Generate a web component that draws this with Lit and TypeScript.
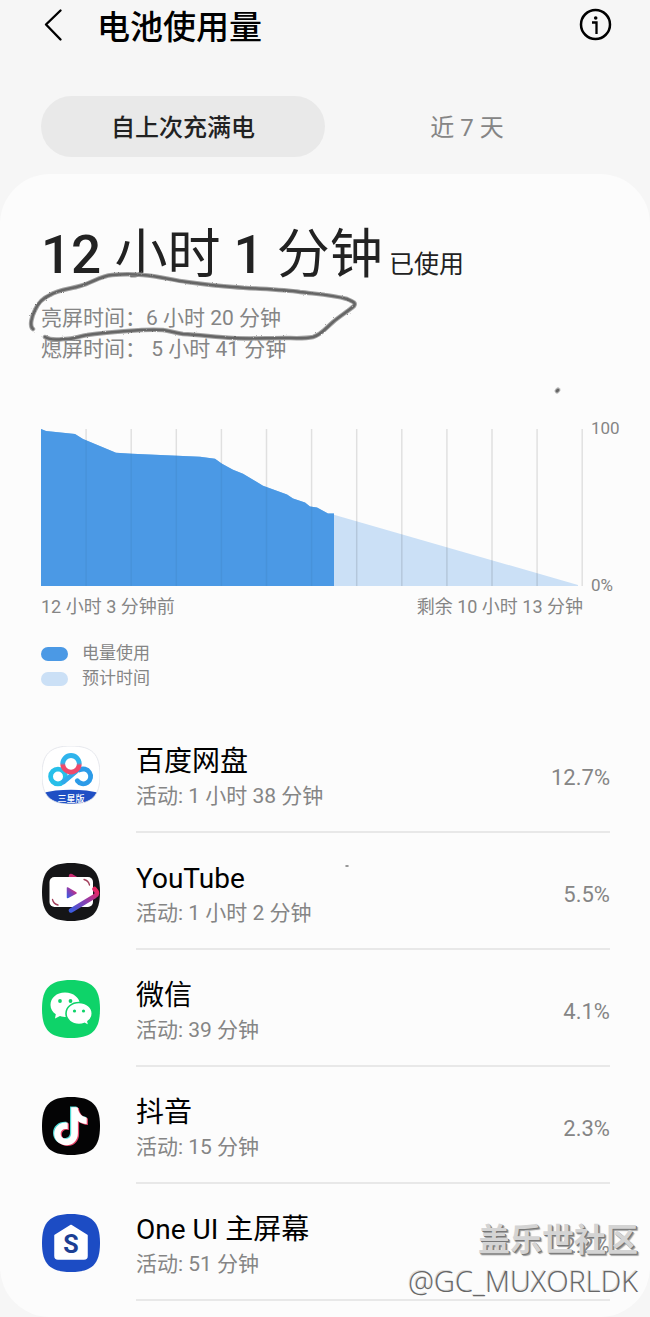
import { LitElement, html, svg, css } from "lit";
import { customElement, state } from "lit/decorators.js";

interface AppUsage {
  name: string;
  active: string;
  percent: string;
  icon: unknown;
}

const SQUIRCLE = "M29 0C50 0 58 8 58 29S50 58 29 58 0 50 0 29 8 0 29 0Z";

const panIcon = svg`
  <defs>
    <clipPath id="pan-clip"><path d=${SQUIRCLE} /></clipPath>
    <linearGradient id="pan-ring" x1="0" y1="0" x2="0" y2="1">
      <stop offset="0.45" stop-color="#2fb4ec" /><stop offset="0.6" stop-color="#ef4a6b" />
    </linearGradient>
  </defs>
  <path d=${SQUIRCLE} fill="#fff" />
  <path d="M0 47C16 42.500 42 42.500 58 47V58H0Z" fill="#1f4fc4" clip-path="url(#pan-clip)" />
  <path d=${SQUIRCLE} fill="none" stroke="#e0e2e8" stroke-width="0.800" />
  <g fill="none" stroke-width="4.800" stroke-linecap="round">
    <circle cx="16" cy="30.500" r="7.400" stroke="#27bfe9" />
    <path d="M35.300 34.800A7.400 7.400 0 1 0 37.500 24" stroke="#2c9be8" />
    <path d="M21.500 35.800L34 25.500" stroke="#31a9ea" />
    <circle cx="29" cy="17.800" r="8.300" stroke="url(#pan-ring)" />
  </g>
  <text class="badge" x="29" y="55.500" text-anchor="middle">三星版</text>`;

const videoIcon = svg`
  <defs>
    <linearGradient id="vid-stroke" x1="0" y1="1" x2="1" y2="0">
      <stop offset="0" stop-color="#3c5be0" /><stop offset="0.5" stop-color="#8a3fb0" /><stop offset="1" stop-color="#f0245c" />
    </linearGradient>
  </defs>
  <path d=${SQUIRCLE} fill="#151517" />
  <path d="M29 13L34 16" stroke="#c92a70" stroke-width="4.500" stroke-linecap="round" />
  <rect x="7.500" y="14" width="43.500" height="30" rx="5" fill="#fff" />
  <path d="M29 47.500L53 33Q56 31 54.500 28.500L52.500 26" fill="none" stroke="url(#vid-stroke)" stroke-width="4.500" stroke-linecap="round" stroke-linejoin="round" />
  <path d="M25.500 25V34.500L34 30Z" fill="url(#vid-stroke)" stroke="url(#vid-stroke)" stroke-width="1.500" stroke-linejoin="round" />
  <path d="M42 16.500Q46.500 17.500 47.500 22M10.500 36.500Q11.500 41 16 42" fill="none" stroke="#a3405c" stroke-width="1.300" stroke-linecap="round" />`;

const chatIcon = svg`
  <path d=${SQUIRCLE} fill="#0ed369" />
  <path d="M23 12.500C14.500 12.500 8.500 18 8.500 25C8.500 29 10.500 32 13.800 34.300L13 38.500L18 36C20 36.800 22 37 25 37C34 36 38 31 38 25C38 18 31.500 12.500 23 12.500Z" fill="#fff" />
  <path d="M37 22.500C29.500 22.500 24 27.500 24 33.500S29.500 44.500 37 44.500C39 44.500 40.800 44.200 42.500 43.500L47 46L46 41.500C48.800 39.500 50.300 36.800 50.300 33.500C50.300 27.500 44.500 22.500 37 22.500Z" fill="#fff" stroke="#0ed369" stroke-width="1.600" />
  <g fill="#0ed369">
    <circle cx="18" cy="21" r="1.900" /><circle cx="28.500" cy="21" r="1.900" />
    <circle cx="32.500" cy="31" r="1.600" /><circle cx="41.500" cy="31" r="1.600" />
  </g>`;

const NOTE = "M28 9.500H34.500C35 15 38.500 19 43.500 19.800V26.300C40 26.200 37 25 34.700 23.300V35.500C34.700 43 29.500 47.500 23 47.500S11 42.500 11 36C11 29 17 24 24.500 24.800V31.500C20.500 30.500 17.500 32.700 17.500 36S20 41 22.800 41C26 41 28 38.800 28 35.500Z";
const noteIcon = svg`
  <path d=${SQUIRCLE} fill="#040405" />
  <path d=${NOTE} fill="#4fd9d6" />
  <path d=${NOTE} fill="#e8476b" transform="translate(2.400 1.600)" />
  <path d=${NOTE} fill="#fff" transform="translate(1.200 0.800)" />`;

const homeIcon = svg`
  <path d=${SQUIRCLE} fill="#1c4cc4" />
  <path d="M29 11.500L45 21.500V42Q45 45 42 45H16Q13 45 13 42V21.500Z" fill="#fff" stroke="#fff" stroke-width="1.500" stroke-linejoin="round" />
  <text class="letter" x="29" y="39" text-anchor="middle">S</text>`;

const APPS: AppUsage[] = [
  { name: "百度网盘", active: "活动: 1 小时 38 分钟", percent: "12.7%", icon: panIcon },
  { name: "YouTube", active: "活动: 1 小时 2 分钟", percent: "5.5%", icon: videoIcon },
  { name: "微信", active: "活动: 39 分钟", percent: "4.1%", icon: chatIcon },
  { name: "抖音", active: "活动: 15 分钟", percent: "2.3%", icon: noteIcon },
  { name: "One UI 主屏幕", active: "活动: 51 分钟", percent: "2.2%", icon: homeIcon },
];

const USED_AREA = "M0 0L5 2L34 5L42 10L75 24L91 25L159 28L174 30L181 35L192 41L202 45L222 57L246 66L252 70L264 74L269 78L276 79L287 85H293V158H0Z";
const PENCIL_LOOP = "M33 329C29 326 32 316 35 310C38 303 43 298 50 295C58 290 70 289 80 286C92 283 100 276 112 275C122 274 133 274 143 275C158 276 172 280 187 282C202 284 218 286 233 287C255 289 280 289 300 292C316 294 333 295 347 299C354 302 356 303 354 306C347 312 340 316 333 322C326 328 321 335 313 337C304 339 293 338 283 338C266 338 250 339 233 338C216 337 200 335 183 334C176 333 170 331 163 330C151 329 139 330 127 331C113 332 100 333 87 335C79 336 72 340 63 339C56 340 50 340 45 337";

@customElement("battery-chart")
export class BatteryChart extends LitElement {
  static styles = css`
    :host { display: block; }
    .plot { display: grid; grid-template-columns: 1fr 30px; column-gap: 8px; }
    .graph { display: block; width: 100%; height: 157px; }
    .scale { display: flex; flex-direction: column; justify-content: space-between; margin: -13px 0 -11px; }
    .scale, .legend { font-size: 17px; line-height: 24px; color: #858585; }
    .range { display: flex; justify-content: space-between; margin: 9px 38px 0 0; font-size: 18px; line-height: 24px; color: #858585; }
    .legend { list-style: none; margin: 22px 0 0; padding: 0; line-height: 25px; }
    .key { display: flex; align-items: center; gap: 14px; }
    .swatch { width: 27px; height: 14px; border-radius: 7px; background: #4b99e5; }
    .swatch.forecast { background: #cbe0f6; }
  `;

  render() {
    const lines = Array.from({ length: 12 }, (_, i) => (i + 1) * 45.1);
    return html`
      <div class="plot">
        <svg class="graph" viewBox="0 0 542 158" preserveAspectRatio="none" role="img" aria-label="电量使用">
          <path fill="#cbe0f6" d="M292 86L537 157V158H292Z" />
          <path fill="#4b99e5" d=${USED_AREA} />
          ${lines.map((x) => svg`<path d="M${x} 0V158" stroke="#000" stroke-opacity="0.110" stroke-width="1.500" />`)}
          <path fill="#4b99e5" fill-opacity="0.600" d=${USED_AREA} />
        </svg>
        <div class="scale"><span>100</span><span>0%</span></div>
      </div>
      <div class="range"><span>12 小时 3 分钟前</span><span>剩余 10 小时 13 分钟</span></div>
      <ul class="legend">
        <li class="key"><span class="swatch"></span>电量使用</li>
        <li class="key"><span class="swatch forecast"></span>预计时间</li>
      </ul>
    `;
  }
}

@customElement("app-root")
export class AppRoot extends LitElement {
  @state() private tab = 0;

  static styles = css`
    :host {
      display: block;
      background: #f6f6f6;
      color: #000;
      font-family: Roboto, "Noto Sans CJK SC", sans-serif;
    }
    button { border: 0; padding: 0; background: none; font: inherit; color: inherit; cursor: pointer; }
    .header { display: flex; align-items: center; height: 50px; padding: 0 37px; }
    .icon-button { display: flex; width: 34px; height: 34px; }
    .title { flex: 1; margin: 0 0 0 26px; padding-top: 5px; font-size: 33px; line-height: 45px; font-weight: 500; }
    .tabs { display: grid; grid-template-columns: 1fr 1fr; margin: 46px 41px 17px; }
    .tab { height: 61px; padding-bottom: 2px; border-radius: 31px; font-size: 24px; color: #858585; }
    .tab[aria-selected="true"] { background: #e9e9e9; color: #222; font-weight: 500; }
    .card { position: relative; padding: 51px 0 16px; border-radius: 50px; background: #fcfcfc; }
    .summary { padding: 0 41px; }
    .total { margin: 0; font-size: 53px; line-height: 60px; color: #222; }
    .number { font-weight: 500; }
    .suffix { font-size: 25px; }
    .times { margin: 8px 0 64px; font-size: 21px; line-height: 31px; color: #858585; }
    .times p { margin: 0; white-space: pre; }
    .chart { margin: 0 29px 0 41px; }
    .apps { list-style: none; margin: 25px 40px 0 42px; padding: 0; }
    .app { display: grid; grid-template-columns: 58px 1fr; column-gap: 36px; align-items: center; }
    .app-icon { display: block; width: 58px; height: 58px; }
    .badge { font-size: 9px; font-weight: 500; fill: #fff; }
    .letter { font-size: 25px; font-weight: 700; fill: #1c3f94; }
    .row { display: flex; align-items: center; justify-content: space-between; box-sizing: border-box; height: 117px; padding-top: 8px; border-bottom: 2px solid #e8e8e8; }
    .name { margin: 0; font-size: 28px; line-height: 36px; font-weight: 400; }
    .active { margin: 0; font-size: 21px; line-height: 32px; color: #858585; }
    .percent { font-size: 22px; color: #858585; }
    .scribble { position: absolute; left: 0; top: 0; width: 600px; height: 720px; pointer-events: none; }
    .watermark { position: absolute; right: 12px; bottom: 17px; text-align: right; pointer-events: none; }
    .community { font-size: 32px; line-height: 44px; font-weight: 700; color: #d4d4d4; text-shadow: 1px 1px 0 #777, 2px 2px 1px #999; }
    .author { font-family: "Open Sans", "Noto Sans", sans-serif; font-size: 29px; line-height: 38px; font-weight: 300; color: #666; text-shadow: -1px -1px 0 #ddd; }
  `;

  private renderApp(app: AppUsage) {
    return html`
      <li class="app">
        <svg class="app-icon" viewBox="0 0 58 58" aria-hidden="true">${app.icon}</svg>
        <div class="row">
          <div>
            <h2 class="name">${app.name}</h2>
            <p class="active">${app.active}</p>
          </div>
          <span class="percent">${app.percent}</span>
        </div>
      </li>
    `;
  }

  render() {
    return html`
      <header class="header">
        <button class="icon-button" aria-label="返回">
          <svg width="34" height="34" viewBox="0 0 34 34" fill="none" stroke="#000" stroke-width="2.400" stroke-linecap="round" stroke-linejoin="round"><path d="M23.500 2.500L9 16.500L23.500 31.500" /></svg>
        </button>
        <h1 class="title">电池使用量</h1>
        <button class="icon-button" aria-label="信息">
          <svg width="34" height="34" viewBox="0 0 34 34" fill="none" stroke="#000" stroke-width="2.500">
            <circle cx="16.500" cy="16.500" r="14.500" /><path d="M13 14.500H17.500V26" stroke-width="2.300" />
            <circle cx="16.700" cy="10" r="1.800" fill="#000" stroke="none" />
          </svg>
        </button>
      </header>
      <div class="tabs" role="tablist">
        ${["自上次充满电", "近 7 天"].map(
          (label, i) => html`<button class="tab" role="tab" aria-selected=${this.tab === i ? "true" : "false"} @click=${() => (this.tab = i)}>${label}</button>`
        )}
      </div>
      <main class="card">
        <section class="summary">
          <p class="total"><span class="number">12</span> 小时 <span class="number">1</span> 分钟<span class="suffix"> 已使用</span></p>
          <div class="times">
            <p>亮屏时间：6 小时 20 分钟</p>
            <p>熄屏时间： 5 小时 41 分钟</p>
          </div>
        </section>
        <battery-chart class="chart"></battery-chart>
        <ul class="apps">${APPS.map((app) => this.renderApp(app))}</ul>
        <svg class="scribble" viewBox="0 174 600 720" fill="none" stroke-linecap="round" stroke-linejoin="round" aria-hidden="true">
          <defs>
            <filter id="pencil" x="-5%" y="-10%" width="110%" height="120%">
              <feTurbulence type="fractalNoise" baseFrequency="0.900" numOctaves="2" result="grain" />
              <feDisplacementMap in="SourceGraphic" in2="grain" scale="2" />
            </filter>
          </defs>
          <g filter="url(#pencil)">
            <path stroke="#a2a2a2" stroke-width="4.500" d=${PENCIL_LOOP} />
            <path stroke="#666" stroke-width="2.500" d=${PENCIL_LOOP} />
          </g>
          <path stroke="#bbb" stroke-width="5" d="M557 391L558 390" />
          <path stroke="#666" stroke-width="3" d="M557 391L558 390" />
          <path stroke="#777" stroke-width="1.500" d="M346 866H348" />
        </svg>
        <div class="watermark">
          <div class="community">盖乐世社区</div>
          <div class="author">@GC_MUXORLDK</div>
        </div>
      </main>
    `;
  }
}
